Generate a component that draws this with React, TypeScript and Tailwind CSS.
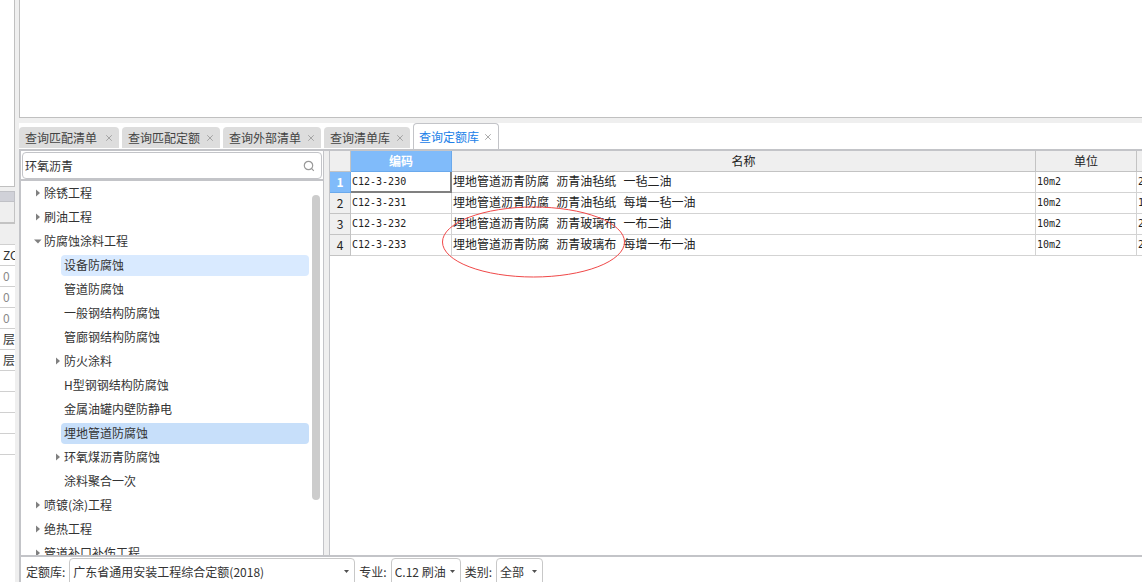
import { X } from "lucide-react";
import clsx from "clsx";

const tabs = [
  { name: "查询匹配清单", width: "w-[100px]" },
  { name: "查询匹配定额", width: "w-[98px]" },
  { name: "查询外部清单", width: "w-[98px]" },
  { name: "查询清单库", width: "w-[86px]" },
  { name: "查询定额库", width: "w-[86px]", active: true },
];

type Node = { name: string; level: 1 | 2; state?: "open" | "closed"; tone?: "hover" | "selected" };

const tree: Node[] = [
  { name: "除锈工程", level: 1, state: "closed" },
  { name: "刷油工程", level: 1, state: "closed" },
  { name: "防腐蚀涂料工程", level: 1, state: "open" },
  { name: "设备防腐蚀", level: 2, tone: "hover" },
  { name: "管道防腐蚀", level: 2 },
  { name: "一般钢结构防腐蚀", level: 2 },
  { name: "管廊钢结构防腐蚀", level: 2 },
  { name: "防火涂料", level: 2, state: "closed" },
  { name: "H型钢钢结构防腐蚀", level: 2 },
  { name: "金属油罐内壁防静电", level: 2 },
  { name: "埋地管道防腐蚀", level: 2, tone: "selected" },
  { name: "环氧煤沥青防腐蚀", level: 2, state: "closed" },
  { name: "涂料聚合一次", level: 2 },
  { name: "喷镀(涂)工程", level: 1, state: "closed" },
  { name: "绝热工程", level: 1, state: "closed" },
  { name: "管道补口补伤工程", level: 1, state: "closed" },
];

const rows = [
  { code: "C12-3-230", name: "埋地管道沥青防腐 沥青油毡纸 一毡二油", unit: "10m2", next: "2" },
  { code: "C12-3-231", name: "埋地管道沥青防腐 沥青油毡纸 每增一毡一油", unit: "10m2", next: "1" },
  { code: "C12-3-232", name: "埋地管道沥青防腐 沥青玻璃布 一布二油", unit: "10m2", next: "2" },
  { code: "C12-3-233", name: "埋地管道沥青防腐 沥青玻璃布 每增一布一油", unit: "10m2", next: "2" },
];

const sideRows = ["ZC", "0", "0", "0", "层", "层", "", "", "", ""];

function Caret({ state }: { state?: "open" | "closed" }) {
  return (
    <svg className="w-2 h-2 shrink-0" viewBox="0 0 8 8" fill="#808080">
      {state === "closed" && <path d="M2 0.5L6 4L2 7.5Z" />}
      {state === "open" && <path d="M0 2.5H7.5L4 6.5Z" />}
    </svg>
  );
}

function SideStrip() {
  return (
    <aside className="w-[15px] shrink-0 flex flex-col overflow-hidden bg-white">
      <div className="h-[187px] shrink-0 border-r border-b border-[#c0c0c0]"></div>
      <div className="h-1 shrink-0 bg-[#efefef]"></div>
      <div className="h-[11px] shrink-0 bg-[#d0d1d8] border border-l-0 border-[#c0c1c6]"></div>
      <div className="h-[22px] shrink-0 bg-[#efefef] border-r border-b-2 border-[#c3c3c3]"></div>
      <div className="h-[21px] shrink-0 bg-[#efefef] border-b border-[#d0d0d0]"></div>
      {sideRows.map((text, i) => (
        <div
          key={i}
          className={clsx(
            "h-[21px] shrink-0 pl-[3px] leading-5 whitespace-nowrap border-b border-[#d0d0d0]",
            text === "0" ? "text-[#8a8a8a]" : "text-[#333333]"
          )}
        >
          {text}
        </div>
      ))}
    </aside>
  );
}

function TabBar() {
  return (
    <div className="h-[26px] shrink-0 flex items-end gap-[3px] bg-white">
      {tabs.map((tab) => (
        <div
          key={tab.name}
          className={clsx(
            "flex items-center justify-between pr-[5px] rounded-t",
            tab.width,
            tab.active
              ? "h-[26px] pl-[5px] bg-white border border-b-0 border-[#c3c4c8] text-[#2080e8]"
              : "h-[21px] mb-px pl-[6px] bg-[#dddddd] text-[#444444]"
          )}
        >
          <button className="whitespace-nowrap leading-5">{tab.name}</button>
          <button aria-label={"关闭" + tab.name} className="text-[#999999]">
            <X size={10} strokeWidth={2} />
          </button>
        </div>
      ))}
    </div>
  );
}

function QuotaTree() {
  return (
    <div className="w-[305px] shrink-0 flex flex-col border-l-2 border-r border-[#c3c4c8] bg-white">
      <div className="h-[30px] shrink-0 px-px pt-px border-b-2 border-[#c3c4c8]">
        <label className="h-[27px] flex items-center pl-[2px] pr-[6px] border border-[#c3c4c8] rounded">
          <input aria-label="查询" defaultValue="环氧沥青" className="min-w-0 flex-1 leading-5 outline-none text-[#333333]" />
          <svg className="w-3 h-3" viewBox="0 0 12 12" fill="none" stroke="#999999" strokeWidth="1.2">
            <circle cx="5.5" cy="5.5" r="4.2" />
            <path d="M8.7 8.7L10.8 10.8" />
          </svg>
        </label>
      </div>
      <div className="flex-1 min-h-0 flex overflow-hidden">
        <ul className="flex-1 min-w-0">
          {tree.map((node) => (
            <li key={node.name} className={clsx("h-6 flex items-center", node.level === 1 ? "pl-[13px]" : "pl-[33px]")}>
              <Caret state={node.state} />
              <button
                className={clsx(
                  "flex-1 h-[21px] pl-[3px] -ml-px text-left leading-5 rounded-sm text-[#333333]",
                  node.tone === "hover" && "bg-[#d9eaff]",
                  node.tone === "selected" && "bg-[#c7dffa]"
                )}
              >
                {node.name}
              </button>
            </li>
          ))}
        </ul>
        <div className="w-[14px] shrink-0 px-[3px] pt-[14px]">
          <div className="h-[305px] rounded-full bg-[#cccccc]"></div>
        </div>
      </div>
    </div>
  );
}

function ResultTable() {
  const head = "h-[21px] p-0 font-normal leading-5 bg-[#efefef] border-r border-b border-[#c3c3c3]";
  const cell = "h-[21px] p-0 pl-px overflow-hidden whitespace-nowrap border-r border-b";
  const plain = "border-[#d3d3d3]";
  const mono = "text-[10px] leading-5 font-['DejaVu_Sans_Mono',monospace]";
  return (
    <div className="relative flex-1 min-w-0 border-l border-[#c3c4c8] bg-white">
      <table className="w-full table-fixed border-separate border-spacing-0 text-[#222222]">
        <colgroup>
          <col className="w-[21px]" />
          <col className="w-[101px]" />
          <col />
          <col className="w-[101px]" />
          <col className="w-[5px]" />
        </colgroup>
        <thead>
          <tr>
            <th className={head}></th>
            <th className="h-[21px] p-0 font-bold leading-5 text-white bg-[#80bbfa] border-r border-b border-[#6aa9ec]">编码</th>
            <th className={head}>名称</th>
            <th className={head}>单位</th>
            <th className="bg-[#efefef] border-b border-[#c3c3c3]"></th>
          </tr>
        </thead>
        <tbody>
          {rows.map((row, i) => (
            <tr key={row.code}>
              <th
                className={clsx(
                  "h-[21px] p-0 leading-5 border-r border-b",
                  i === 0 ? "bg-[#80bbfa] border-[#6aa9ec] text-white font-bold" : "bg-[#efefef] border-[#c3c3c3] font-normal"
                )}
              >
                {i + 1}
              </th>
              <td className={clsx(cell, mono, i === 0 ? "shadow-[inset_-1px_-1px_0_#808080] border-[#808080]" : plain)}>{row.code}</td>
              <td className={clsx(cell, plain, "pt-[2px] leading-[18px] font-['Liberation_Mono','Noto_Sans_CJK_SC',monospace]")}>
                {row.name}
              </td>
              <td className={clsx(cell, plain, mono)}>{row.unit}</td>
              <td className={clsx(cell, plain, mono, "border-r-0")}>{row.next}</td>
            </tr>
          ))}
        </tbody>
      </table>

      {/* Red mark over the matching rows */}
      <svg className="absolute left-[112px] top-[55px] w-[186px] h-[73px] pointer-events-none" viewBox="0 0 186 73" fill="none">
        <ellipse cx="91.5" cy="36" rx="91" ry="35" stroke="#f04848" />
      </svg>
    </div>
  );
}

function Picker({ label, value, width }: { label: string; value: string; width: string }) {
  return (
    <label className="flex items-center gap-1 whitespace-nowrap">
      {label}
      <span className={clsx("relative", width)}>
        <select className="w-full h-7 pl-[3px] appearance-none bg-white border border-[#c8c8c8] rounded outline-none">
          <option>{value}</option>
        </select>
        <svg className="absolute right-[6px] top-3 w-[5px] h-[3px] pointer-events-none" viewBox="0 0 5 3" fill="#505050">
          <path d="M0 0H5L2.5 3Z" />
        </svg>
      </span>
    </label>
  );
}

export default function App() {
  return (
    <div className="h-screen flex overflow-hidden bg-[#efefef] text-xs text-[#333333] font-['Noto_Sans_CJK_SC',sans-serif]">
      <SideStrip />
      <main className="flex-1 min-w-0 ml-1 flex flex-col">
        <div className="h-[118px] shrink-0 bg-white border-l border-b border-[#c0c0c0]"></div>
        <div className="h-[5px] shrink-0"></div>
        <TabBar />
        <div className="flex-1 min-h-0 flex border-t-2 border-[#c3c4c8]">
          <QuotaTree />
          <div className="w-[5px] shrink-0"></div>
          <ResultTable />
        </div>
        <div className="h-[27px] shrink-0 flex items-start gap-1 pl-[5px] pt-px bg-white border-t-2 border-l-2 border-[#c3c4c8]">
          <Picker label="定额库:" value="广东省通用安装工程综合定额(2018)" width="w-[286px]" />
          <Picker label="专业:" value="C.12 刷油" width="w-[70px]" />
          <Picker label="类别:" value="全部" width="w-[47px]" />
        </div>
      </main>
    </div>
  );
}
